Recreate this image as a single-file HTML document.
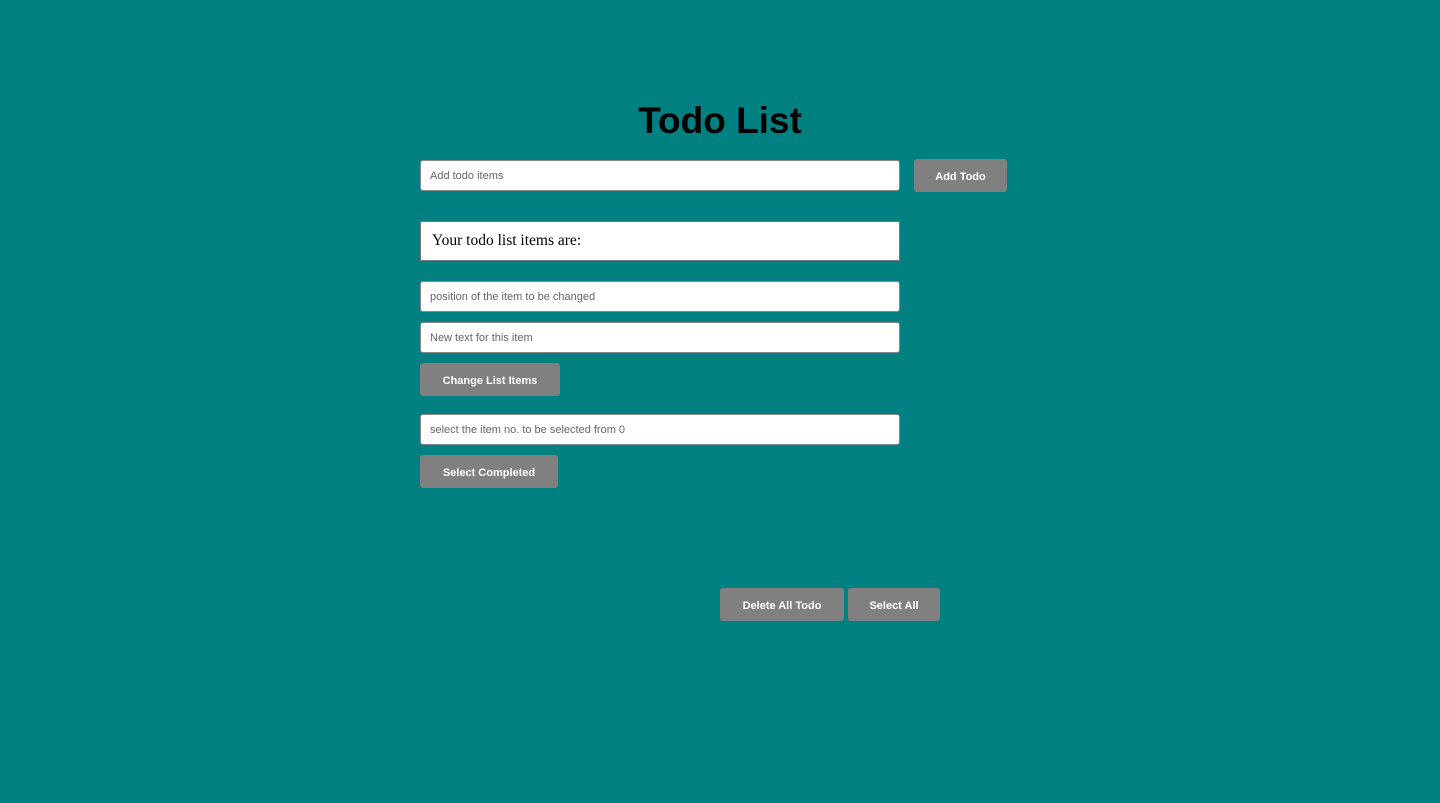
<!DOCTYPE html>
<html><head><style>
body{margin:0;width:1440px;height:803px;background:#008080;position:relative;overflow:hidden;font-family:"Liberation Sans",sans-serif}
.a{position:absolute;box-sizing:border-box}
.in{background:#fff;border:1px solid #888;border-radius:3px;width:480px;height:31px;left:420px;font-size:11px;color:#666;padding-left:9px;line-height:31px}
.b{background:#808080;color:#fff;border-radius:3px;font-weight:bold;font-size:11px;text-align:center;height:33px;line-height:36px}
h1{position:absolute;margin:0;left:0;width:1440px;text-align:center;top:100px;font-size:37px;line-height:42px;font-weight:bold;color:#000}
</style></head><body>
<h1>Todo List</h1>
<div class="a in" style="top:160px">Add todo items</div>
<div class="a b" style="left:914px;top:159px;width:93px">Add Todo</div>
<div class="a" style="left:420px;top:221px;width:480px;height:40px;background:#fff;border:1px solid #777;font-family:'Liberation Serif',serif;font-size:15.5px;line-height:38px;padding-left:11px">Your todo list items are:</div>
<div class="a in" style="top:281px">position of the item to be changed</div>
<div class="a in" style="top:322px">New text for this item</div>
<div class="a b" style="left:420px;top:363px;width:140px">Change List Items</div>
<div class="a in" style="top:414px">select the item no. to be selected from 0</div>
<div class="a b" style="left:420px;top:455px;width:138px">Select Completed</div>
<div class="a b" style="left:720px;top:588px;width:124px">Delete All Todo</div>
<div class="a b" style="left:848px;top:588px;width:92px">Select All</div>
</body></html>
